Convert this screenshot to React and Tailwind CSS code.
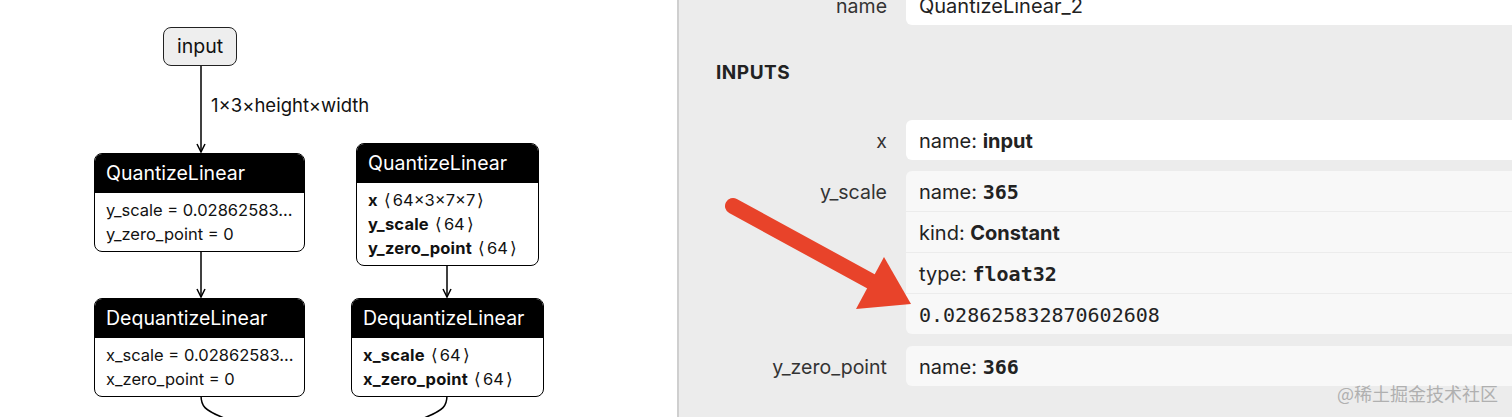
import React from "react";

const sans = { fontFamily: "Inter, 'Noto Sans', sans-serif" };
const mono = { fontFamily: "'DejaVu Sans Mono', 'Liberation Mono', monospace" };

const Shape = ({ name, dims }) => (
  <>
    <b className="tracking-[0.2px]">{name}</b>
    <span className="ml-[6px]">⟨</span>
    <span className="mx-[2px]">{dims}</span>
    <span>⟩</span>
  </>
);

const Node = ({ title, lines, className }) => (
  <div
    className={`absolute border-[1.5px] border-black rounded-[8px] overflow-hidden bg-white ${className}`}
  >
    <div className="bg-black text-white text-[19.5px] h-[39px] leading-[39px] px-[11px]">{title}</div>
    <div className="px-[11px] pt-[5px] pb-[5px] text-[16.5px] leading-[24px] text-[#111]">
      {lines.map((l, i) => (
        <div key={i} className="whitespace-nowrap">
          {l}
        </div>
      ))}
    </div>
  </div>
);

const Graph = () => (
  <div className="relative w-[677px] h-[417px] bg-white shrink-0 overflow-hidden" style={sans}>
    <svg className="absolute inset-0" width="677" height="417">
      <defs>
        <marker id="ah" markerWidth="10" markerHeight="10" refX="9" refY="5" orient="auto" markerUnits="userSpaceOnUse">
          <path d="M1 1 L9 5 L1 9" fill="none" stroke="#000" strokeWidth="1.5" />
        </marker>
      </defs>
      <line x1="201" y1="66" x2="201" y2="152" stroke="#000" strokeWidth="1.5" markerEnd="url(#ah)" />
      <line x1="201" y1="250" x2="201" y2="297" stroke="#000" strokeWidth="1.5" markerEnd="url(#ah)" />
      <line x1="447" y1="262" x2="447" y2="297" stroke="#000" strokeWidth="1.5" markerEnd="url(#ah)" />
      <path d="M201 395 C201 406 204 410 224 418" fill="none" stroke="#000" strokeWidth="1.5" />
      <path d="M447 395 C447 406 444 410 424 418" fill="none" stroke="#000" strokeWidth="1.5" />
    </svg>
    <div className="absolute left-[163px] top-[27px] w-[74px] h-[39px] bg-[#eeeeee] border-[1.5px] border-[#222] rounded-[8px] flex items-center justify-center text-[19.5px] text-[#111]">
      input
    </div>
    <div className="absolute left-[211px] top-[92px] text-[18.5px] text-[#111]">1×3×height×width</div>
    <Node
      title="QuantizeLinear"
      className="left-[94px] top-[153px] w-[211px]"
      lines={["y_scale = 0.02862583…", "y_zero_point = 0"]}
    />
    <Node
      title="QuantizeLinear"
      className="left-[356px] top-[143px] w-[183px]"
      lines={[
        <Shape name="x" dims="64×3×7×7" />,
        <Shape name="y_scale" dims="64" />,
        <Shape name="y_zero_point" dims="64" />,
      ]}
    />
    <Node
      title="DequantizeLinear"
      className="left-[94px] top-[298px] w-[211px]"
      lines={["x_scale = 0.02862583…", "x_zero_point = 0"]}
    />
    <Node
      title="DequantizeLinear"
      className="left-[351px] top-[298px] w-[193px]"
      lines={[<Shape name="x_scale" dims="64" />, <Shape name="x_zero_point" dims="64" />]}
    />
  </div>
);

const Row = ({ label, children, className = "" }) => (
  <div className={`flex ${className}`}>
    <div className="w-[208px] h-[40px] shrink-0 text-right text-[19.5px] leading-[42px] text-[#333]">{label}</div>
    <div className="ml-[19px] flex-1 flex flex-col gap-[1px] rounded-l-[6px] overflow-hidden">{children}</div>
  </div>
);

const Cell = ({ children, white }) => (
  <div className={`h-[40px] leading-[42px] px-[13px] text-[20px] text-[#222] ${white ? "bg-white" : "bg-[#f8f8f8]"}`}>
    {children}
  </div>
);

const Panel = () => (
  <div className="relative flex-1 h-[417px] bg-[#ececec] border-l-2 border-[#cfcfcf] overflow-hidden" style={sans}>
    <Row label="name" className="-mt-[15px]">
      <Cell white>QuantizeLinear_2</Cell>
    </Row>
    <div className="ml-[37px] mt-[35px] h-[26px] leading-[26px] text-[19px] font-bold tracking-[0.5px] text-[#222]">
      INPUTS
    </div>
    <Row label="x" className="mt-[34px]">
      <Cell white>
        name: <b>input</b>
      </Cell>
    </Row>
    <Row label="y_scale" className="mt-[11px]">
      <Cell>
        name: <b style={mono}>365</b>
      </Cell>
      <Cell>
        kind: <b>Constant</b>
      </Cell>
      <Cell>
        type: <b style={mono}>float32</b>
      </Cell>
      <Cell>
        <span style={mono}>0.028625832870602608</span>
      </Cell>
    </Row>
    <Row label="y_zero_point" className="mt-[12px]">
      <Cell>
        name: <b style={mono}>366</b>
      </Cell>
    </Row>
    <div
      className="absolute right-[14px] bottom-[10px] text-[18px] text-[#b0b0b0]"
      style={{ fontFamily: "'Noto Sans CJK SC', sans-serif" }}
    >
      @稀土掘金技术社区
    </div>
    <svg className="absolute left-0 top-0" width="835" height="417">
      <line x1="54" y1="206" x2="195" y2="283" stroke="#e8432a" strokeWidth="16" strokeLinecap="round" />
      <polygon points="205,257 177,309 232,304" fill="#e8432a" />
    </svg>
  </div>
);

export default function App() {
  return (
    <div className="flex w-[1512px] h-[417px] overflow-hidden">
      <Graph />
      <Panel />
    </div>
  );
}
